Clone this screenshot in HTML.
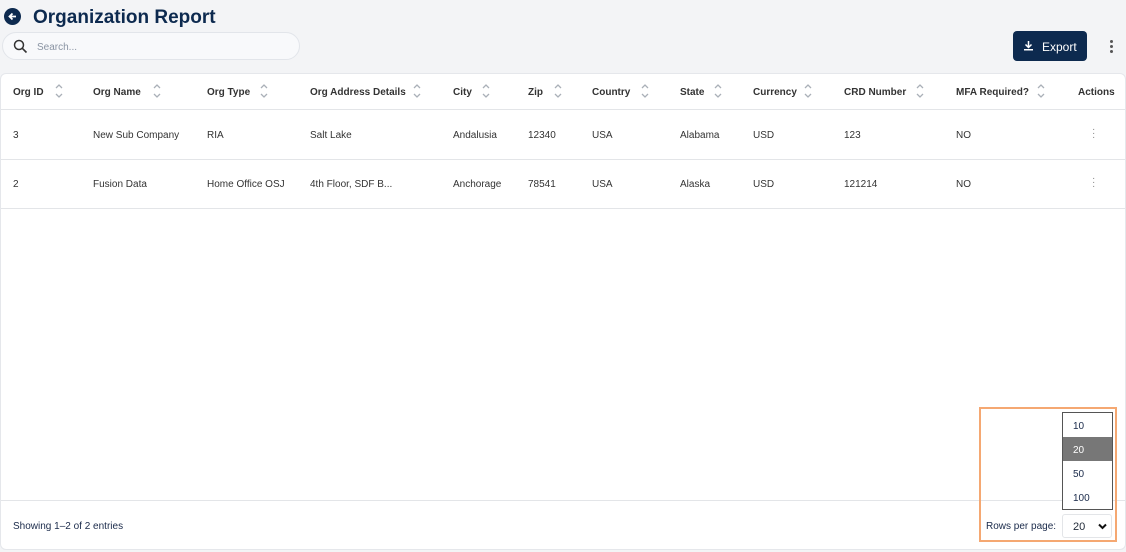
<!DOCTYPE html>
<html><head><style>
*{box-sizing:border-box;margin:0;padding:0}
body{width:1126px;height:552px;background:#f3f4f6;font-family:"Liberation Sans",sans-serif;position:relative;overflow:hidden;color:#1f2937}
.abs{position:absolute}
h1{position:absolute;left:33px;top:7px;font-size:19px;font-weight:bold;color:#0d2a4f}
.back{left:4px;top:8px;width:17px;height:17px;border-radius:50%;background:#0d2a4f}
.search{left:2px;top:32px;width:298px;height:28px;border:1px solid #e2e5ea;border-radius:14px;background:#f8f9fb}
.search span{position:absolute;left:34px;top:9px;font-size:10px;color:#8a94a3}
.export{left:1013px;top:31px;width:74px;height:30px;background:#0d2a4f;border-radius:4px;color:#fff;font-size:12px}
.card{left:0;top:73px;width:1126px;height:477px;background:#fff;border-radius:6px;border:1px solid #e5e7eb}
.th{top:87px;font-size:10px;font-weight:bold;color:#333}
.td{font-size:10px;color:#333}
.sort{width:10px;height:16px}
.line{left:1px;width:1124px;height:1px;background:#e3e5e8}
.opt{left:1063px;width:49px;height:24px;font-size:10px;padding:8px 0 0 10px;color:#1a2a4a}
</style></head><body>
<div class="abs back"><svg width="17" height="17" viewBox="0 0 17 17"><path d="M12 8.5H5.5M8.5 5.5L5.5 8.5 8.5 11.5" stroke="#fff" stroke-width="1.8" fill="none"/></svg></div>
<h1>Organization Report</h1>
<div class="abs search"><svg class="abs" style="left:10px;top:6px" width="15" height="15" viewBox="0 0 15 15"><circle cx="6" cy="6" r="4.5" stroke="#333" stroke-width="1.5" fill="none"/><path d="M9.3 9.3L13.5 13.5" stroke="#333" stroke-width="1.6"/></svg><span>Search...</span></div>
<div class="abs export"><svg class="abs" style="left:11px;top:10px" width="9" height="10" viewBox="0 0 9 10"><path d="M4.5 0V6M1.5 3.5L4.5 6.5 7.5 3.5" stroke="#fff" stroke-width="1.5" fill="none"/><rect x="0" y="8" width="9" height="1.5" fill="#fff"/></svg><span class="abs" style="left:29px;top:9px">Export</span></div>
<div class="abs" style="left:1110px;top:40px;width:3px"><div style="width:3px;height:3px;background:#555;border-radius:50%;margin-bottom:2px"></div><div style="width:3px;height:3px;background:#555;border-radius:50%;margin-bottom:2px"></div><div style="width:3px;height:3px;background:#555;border-radius:50%"></div></div>
<div class="abs card"></div>
<div class="abs line" style="top:109px"></div>
<div class="abs line" style="top:159px"></div>
<div class="abs line" style="top:208px"></div>
<div class="abs line" style="top:500px"></div>
<div class="abs th" style="left:13px">Org ID</div>
<div class="abs th" style="left:93px">Org Name</div>
<div class="abs th" style="left:207px">Org Type</div>
<div class="abs th" style="left:310px">Org Address Details</div>
<div class="abs th" style="left:453px">City</div>
<div class="abs th" style="left:528px">Zip</div>
<div class="abs th" style="left:592px">Country</div>
<div class="abs th" style="left:680px">State</div>
<div class="abs th" style="left:753px">Currency</div>
<div class="abs th" style="left:844px">CRD Number</div>
<div class="abs th" style="left:956px">MFA Required?</div>
<div class="abs th" style="left:1078px">Actions</div>
<svg class="abs" style="left:0;top:83px" width="1126" height="18">
<defs><g id="s"><path d="M1 5L4 2 7 5M1 11L4 14 7 11" stroke="#aab0b8" stroke-width="1.3" fill="none"/></g></defs>
<use href="#s" x="55"/><use href="#s" x="153"/><use href="#s" x="260"/><use href="#s" x="413"/><use href="#s" x="482"/><use href="#s" x="554"/><use href="#s" x="641"/><use href="#s" x="714"/><use href="#s" x="804"/><use href="#s" x="916"/><use href="#s" x="1037"/>
</svg>
<div class="abs td" style="top:130px;left:13px">3</div>
<div class="abs td" style="top:130px;left:93px">New Sub Company</div>
<div class="abs td" style="top:130px;left:207px">RIA</div>
<div class="abs td" style="top:130px;left:310px">Salt Lake</div>
<div class="abs td" style="top:130px;left:453px">Andalusia</div>
<div class="abs td" style="top:130px;left:528px">12340</div>
<div class="abs td" style="top:130px;left:592px">USA</div>
<div class="abs td" style="top:130px;left:680px">Alabama</div>
<div class="abs td" style="top:130px;left:753px">USD</div>
<div class="abs td" style="top:130px;left:844px">123</div>
<div class="abs td" style="top:130px;left:956px">NO</div>
<div class="abs td" style="top:128px;left:1092px;color:#888;line-height:4px">·<br>·<br>·</div>
<div class="abs td" style="top:179px;left:13px">2</div>
<div class="abs td" style="top:179px;left:93px">Fusion Data</div>
<div class="abs td" style="top:179px;left:207px">Home Office OSJ</div>
<div class="abs td" style="top:179px;left:310px">4th Floor, SDF B...</div>
<div class="abs td" style="top:179px;left:453px">Anchorage</div>
<div class="abs td" style="top:179px;left:528px">78541</div>
<div class="abs td" style="top:179px;left:592px">USA</div>
<div class="abs td" style="top:179px;left:680px">Alaska</div>
<div class="abs td" style="top:179px;left:753px">USD</div>
<div class="abs td" style="top:179px;left:844px">121214</div>
<div class="abs td" style="top:179px;left:956px">NO</div>
<div class="abs td" style="top:177px;left:1092px;color:#888;line-height:4px">·<br>·<br>·</div>
<div class="abs td" style="top:521px;left:13px;color:#1a2a4a">Showing 1–2 of 2 entries</div>
<div class="abs" style="left:979px;top:407px;width:138px;height:135px;border:2px solid #f5a872"></div>
<div class="abs" style="left:1062px;top:412px;width:51px;height:98px;border:1px solid #555;background:#fff"></div>
<div class="abs opt" style="top:413px">10</div>
<div class="abs opt" style="top:437px;background:#777;color:#fff">20</div>
<div class="abs opt" style="top:461px">50</div>
<div class="abs opt" style="top:485px">100</div>
<div class="abs td" style="top:521px;left:986px;color:#1a2a4a">Rows per page:</div>
<div class="abs" style="left:1062px;top:514px;width:50px;height:24px;border:1px solid #e3e5e8;border-radius:3px;font-size:11px;padding:6px 0 0 10px">20<svg class="abs" style="left:35px;top:8px" width="9" height="7" viewBox="0 0 9 7"><path d="M1 1.5L4.5 5 8 1.5" stroke="#111" stroke-width="2" fill="none"/></svg></div>
</body></html>
